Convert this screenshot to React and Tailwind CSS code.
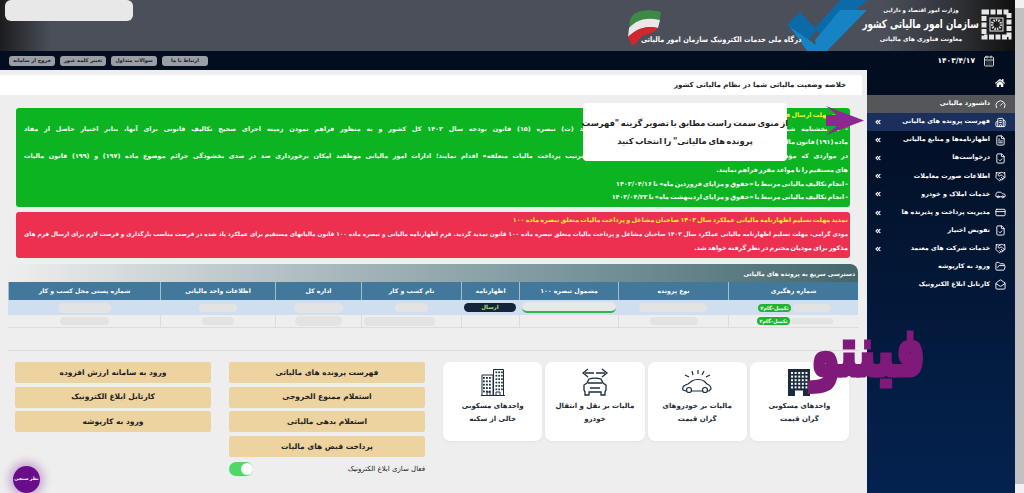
import { Gauge, Building2, FileText, FileCheck, Handshake, Car, CreditCard, FolderOpen, MailOpen, ChevronsLeft, CalendarDays } from 'lucide-react'
import { FaHome } from 'react-icons/fa'

const menu = [
  { label: 'فهرست پرونده های مالیاتی', icon: Building2, arrow: true, active: true },
  { label: 'اظهارنامه‌ها و منابع مالیاتی', icon: FileText, arrow: true },
  { label: 'درخواست‌ها', icon: FileCheck, arrow: true },
  { label: 'اطلاعات صورت معاملات', icon: Handshake, arrow: true },
  { label: 'خدمات املاک و خودرو', icon: Car, arrow: true },
  { label: 'مدیریت پرداخت و پذیرنده ها', icon: CreditCard, arrow: true },
  { label: 'تفویض اختیار', icon: FileCheck, arrow: true },
  { label: 'خدمات شرکت های معتمد', icon: Handshake, arrow: true },
  { label: 'ورود به کارپوشه', icon: FolderOpen },
  { label: 'کارتابل ابلاغ الکترونیک', icon: MailOpen },
]

const columns = ['شماره رهگیری', 'نوع پرونده', 'مشمول تبصره ۱۰۰', 'اظهارنامه', 'نام کسب و کار', 'اداره کل', 'اطلاعات واحد مالیاتی', 'شماره پستی محل کسب و کار']

function Blur({ className }) {
  return <span className={`block rounded-full bg-[#e3e3e3] ${className}`} />
}

function Badge() {
  return <span className="rounded-full bg-[#1fb52f] px-[2px] text-[5px] font-bold leading-[8px] text-white whitespace-nowrap">تکمیل-گام۴</span>
}

function TopBar() {
  return (
    <header className="relative h-[51px] shrink-0 overflow-hidden bg-[linear-gradient(to_left,#0f0f10_0%,#2c2e33_5%,#4a4f59_13%,#4a4f59_95%,#1c1c1e_100%)]">
      {/* blue check mark */}
      <svg className="absolute left-[787px] top-0" width="80" height="51" viewBox="0 0 80 51">
        <polygon points="53,0 80,0 38,40 28,28" fill="#0c6aa8" />
        <polygon points="0,25 13,12 30,30 20,42" fill="#0c6aa8" />
        <polygon points="53,10 80,10 40,51 30,51 28,40" fill="#1583c4" />
        <polygon points="3,27 22,40 38,51 20,51" fill="#1583c4" />
      </svg>
      {/* emblem */}
      <svg className="absolute left-[981px] top-[9px]" width="31" height="31" viewBox="0 0 31 31">
        <rect x="3" y="3" width="25" height="25" fill="none" stroke="#e6e6e6" strokeWidth="5" strokeDasharray="5 1.5" />
        <rect x="9" y="9" width="13" height="13" fill="#1d1d1d" stroke="#e6e6e6" />
        <circle cx="15.5" cy="15.5" r="4.5" fill="none" stroke="#d8d8d8" strokeWidth="2.5" strokeDasharray="1.5 1" />
      </svg>
      {/* flag */}
      <svg className="absolute left-[625px] top-[8px]" width="38" height="38" viewBox="0 0 38 38">
        <path d="M5 12 C8 3 20 0 36 4 L35 12 C22 9 12 11 4 20 Z" fill="#3c8a44" />
        <path d="M4 20 C12 11 22 9 35 12 L33 20 C22 17 12 20 3 29 Z" fill="#e8e8e8" />
        <path d="M3 29 C12 20 22 17 33 20 C30 24 24 26 17 28 C14 31 12 36 8 37 C6 37 5 32 3 29 Z" fill="#d0262e" />
      </svg>
      <div className="absolute right-[34px] top-[4px] flex w-[120px] flex-col items-center text-white">
        <span className="text-[5.5px] font-bold leading-[12px] whitespace-nowrap">وزارت امور اقتصاد و دارایی</span>
        <span className="scale-x-[0.76] text-[11.5px] font-bold leading-[17px] whitespace-nowrap">سازمان امور مالیاتی کشور</span>
        <span className="text-[6px] font-bold leading-[11px] whitespace-nowrap">معاونت فناوری های مالیاتی</span>
      </div>
      <span className="absolute right-[214px] top-[34px] origin-right scale-x-[0.88] text-[7.5px] font-semibold leading-[12px] text-white whitespace-nowrap">درگاه ملی خدمات الکترونیک سازمان امور مالیاتی</span>
      <div className="absolute left-[5px] top-0 h-[21px] w-[128px] rounded-[6px] bg-[#e8e8e8]" />
    </header>
  )
}

function NavStrip() {
  return (
    <div className="flex h-[19px] shrink-0 items-center justify-between bg-[#020d1f] pl-[9px] pr-[20px]">
      <div className="flex items-center gap-[8px] text-white">
        <CalendarDays size={12} className="text-[#d8d8d8]" />
        <span className="font-bold text-[7.5px]">۱۴۰۳/۴/۱۷</span>
      </div>
      <div className="flex flex-row-reverse gap-[5px]">
        {['خروج از سامانه', 'تغییر کلمه عبور', 'سوالات متداول', 'ارتباط با ما'].map(t => (
          <span key={t} className="flex h-[10px] w-[46px] items-center justify-center rounded-[3px] bg-[#9a9ea6] text-[5px] font-bold text-[#1b1b1b] whitespace-nowrap">{t}</span>
        ))}
      </div>
    </div>
  )
}

function Sidebar() {
  return (
    <aside className="flex w-[148px] shrink-0 flex-col bg-[linear-gradient(to_bottom,#020d1f,#04224f)] text-white">
      <div className="flex h-[25px] items-center pr-[10px]">
        <FaHome size={10} />
      </div>
      <div className="flex h-[18px] items-center gap-[5px] bg-[#55565a] pr-[9px]">
        <Gauge size={11} />
        <span className="text-[6.4px] font-bold whitespace-nowrap">داشبورد مالیاتی</span>
      </div>
      {menu.map(m => {
        const Icon = m.icon
        return (
          <div key={m.label} className={`flex h-[18.1px] items-center gap-[5px] pr-[9px] pl-[7px] ${m.active ? 'bg-[#1b2f5c]' : ''}`}>
            <Icon size={11} className="shrink-0" />
            <span className="flex-1 text-[6.4px] font-bold whitespace-nowrap">{m.label}</span>
            {m.arrow && <ChevronsLeft size={8} strokeWidth={3.5} className="shrink-0" />}
          </div>
        )
      })}
    </aside>
  )
}

function Line({ children, fill, className = '' }) {
  return <p className={`overflow-hidden whitespace-nowrap ${fill ? '[text-align-last:justify]' : ''} ${className}`}>{children}</p>
}

function Notices() {
  return (
    <>
      <div className="ml-[16px] mr-[17px] mt-[13px] h-[99px] rounded-[3px] bg-[#0bb420] pl-[8px] pr-[2px] py-[1px] text-[6.4px] font-bold leading-[13.7px] text-white [word-spacing:-1px]">
        <Line className="text-[#f3f12a]">تمدید مهلت ارسال فهرست حقوق و دستمزد فروردین و اردیبهشت سال ۱۴۰۳</Line>
        <Line fill>- به بخشنامه شماره ۲۰۰ فهرست حقوق و دستمزد در اجرای مقررات بند (ت) تبصره (۱۵) قانون بودجه سال ۱۴۰۳ کل کشور و به منظور فراهم نمودن زمینه اجرای صحیح تکالیف قانونی برای آنها، بنابر اختیار حاصل از مفاد</Line>
        <Line>ماده (۱۹۱) قانون مالیات های مستقیم</Line>
        <Line fill>در مواردی که مؤدیان نسبت به ارسال فهرست حقوق‌بگیران» و «پرداخت یا ترتیب پرداخت مالیات متعلقه» اقدام نمایند؛ ادارات امور مالیاتی موظفند امکان برخورداری صد در صدی بخشودگی جرائم موضوع ماده (۱۹۷) و (۱۹۹) قانون مالیات</Line>
        <Line>های مستقیم را تا مواعد مقرر فراهم نمایند.</Line>
        <Line>- انجام تکالیف مالیاتی مرتبط با «حقوق و مزایای فروردین ماه» تا ۱۴۰۳/۰۴/۱۶</Line>
        <Line>- انجام تکالیف مالیاتی مرتبط با «حقوق و مزایای اردیبهشت ماه» تا ۱۴۰۳/۰۴/۲۳</Line>
      </div>
      <div className="ml-[16px] mr-[17px] mt-[5px] h-[46px] rounded-[3px] bg-[#ee3050] pl-[8px] pr-[2px] pt-[1px] text-[6.4px] font-bold leading-[14px] text-white [word-spacing:-1px]">
        <Line className="text-[#f3f12a]">تمدید مهلت تسلیم اظهارنامه مالیاتی عملکرد سال ۱۴۰۲ صاحبان مشاغل و پرداخت مالیات متعلق تبصره ماده ۱۰۰</Line>
        <Line fill className="text-[5.8px] [word-spacing:-1.2px]">مودی گرامی، مهلت تسلیم اظهارنامه مالیاتی عملکرد سال ۱۴۰۲ صاحبان مشاغل و پرداخت مالیات متعلق تبصره ماده ۱۰۰ قانون تمدید گردید. فرم اظهارنامه مالیاتی و تبصره ماده ۱۰۰ قانون مالیاتهای مستقیم برای عملکرد یاد شده در فرصت مناسب بارگذاری و فرصت لازم برای ارسال فرم های</Line>
        <Line>مذکور برای مودیان محترم در نظر گرفته خواهد شد.</Line>
      </div>
    </>
  )
}

const gridCols = 'grid grid-cols-[130px_110px_99px_58px_100px_86px_115px_1fr]'

function QuickTable() {
  return (
    <section className="ml-[8px] mr-[9px] mt-[6px]">
      <div className="flex h-[18px] items-center rounded-tr-[8px] bg-[linear-gradient(to_left,#46666e,#6b8a92_25%,#a5b6bb_60%,#eeeeee)] pr-[3px] text-[6px] font-bold text-white">
        دسترسی سریع به پرونده های مالیاتی
      </div>
      <div className={`${gridCols} h-[18px] bg-[#41789b] text-[6.2px] font-bold text-white`}>
        {columns.map(c => (
          <div key={c} className="flex items-center justify-center border-l border-[#a8bccb] whitespace-nowrap">{c}</div>
        ))}
      </div>
      <div className={`${gridCols} h-[15px] bg-[#cfdff0]`}>
        <div className="flex items-center justify-center gap-[2px] pl-[3px]"><Blur className="h-[8px] w-[38px]" /><Badge /></div>
        <div className="flex items-center justify-center"><Blur className="h-[9px] w-[68px]" /></div>
        <div className="flex items-center justify-center"><span className="h-[11px] w-[94px] rounded-[6px] border-b-2 border-[#2fb54a] bg-[#e8e8e8]" /></div>
        <div className="flex items-center justify-center"><span className="flex h-[9px] w-[52px] items-center justify-center rounded-full bg-[#14253a] text-[5.5px] font-bold text-[#b5e27a]">ارسال</span></div>
        <div className="flex items-center justify-center"><Blur className="h-[9px] w-[33px]" /></div>
        <div className="flex items-center justify-center"><Blur className="h-[10px] w-[49px]" /></div>
        <div className="flex items-center justify-center"><Blur className="h-[8px] w-[38px]" /></div>
        <div className="flex items-center justify-center"><Blur className="h-[10px] w-[53px]" /></div>
      </div>
      <div className={`${gridCols} h-[13px] border-b border-[#dcdcdc] bg-[#eeeeee]`}>
        <div className="flex items-center justify-center gap-[1px] border-l border-[#dcdcdc] pl-[3px]"><Blur className="h-[6px] w-[42px]" /><Badge /></div>
        <div className="flex items-center justify-center border-l border-[#dcdcdc]"><Blur className="h-[8px] w-[48px]" /></div>
        <div className="border-l border-[#dcdcdc]" />
        <div className="border-l border-[#dcdcdc]" />
        <div className="flex items-center justify-start border-l border-[#dcdcdc] pl-[2px]"><Blur className="mr-[26px] h-[9px] w-[72px]" /></div>
        <div className="flex items-center justify-center border-l border-[#dcdcdc]"><Blur className="h-[10px] w-[47px]" /></div>
        <div className="flex items-center justify-center border-l border-[#dcdcdc]"><Blur className="h-[8px] w-[32px]" /></div>
        <div className="flex items-center justify-center"><Blur className="h-[8px] w-[49px]" /></div>
      </div>
    </section>
  )
}

function BuildingSolid() {
  const dots = []
  for (let r = 0; r < 5; r++) for (let c = 0; c < 5; c++) dots.push(<rect key={`${r}-${c}`} x={3 + c * 3.6} y={3 + r * 3.6} width="2" height="2" fill="#fff" />)
  return (
    <svg width="22" height="27" viewBox="0 0 22 27">
      <rect width="22" height="27" fill="#1a2c40" />
      {dots}
      <rect x="7" y="21.5" width="8" height="5.5" fill="#fff" />
    </svg>
  )
}

function CarRays() {
  return (
    <svg width="30" height="24" viewBox="0 0 30 24" fill="none" stroke="#1a2c40" strokeWidth="1.2">
      <path d="M10 1l1 4M16 0v4M22 1l-2 4M3 5l4 2M28 5l-4 2" />
      <path d="M1 20c-1-3 1-5 5-6l4-3c3-2 9-2 12 0l3 3c3 1 4 2 4 5l-2 2H4z" />
      <circle cx="7" cy="20" r="2.5" fill="#fff" />
      <circle cx="23" cy="20" r="2.5" fill="#fff" />
    </svg>
  )
}

function CarArrows() {
  return (
    <svg width="26" height="28" viewBox="0 0 26 28" fill="none" stroke="#1a2c40" strokeWidth="1.3">
      <path d="M12 5H3m3-4L1 5l5 4M14 5h9m-3-4 5 4-5 4" />
      <path d="M3 27v-3l-1-2v-5l3-2 2-4c3-1 9-1 12 0l2 4 3 2v5l-1 2v3h-4v-3H7v3z" />
      <path d="M6 15h14M8 20h10" />
    </svg>
  )
}

function Buildings() {
  const left = [], right = []
  for (let r = 0; r < 5; r++) for (let c = 0; c < 3; c++) left.push(<rect key={`l${r}${c}`} x={2 + c * 3} y={8 + r * 3.4} width="1.8" height="1.8" fill="#1a2c40" stroke="none" />)
  for (let r = 0; r < 6; r++) for (let c = 0; c < 3; c++) right.push(<rect key={`r${r}${c}`} x={14.5 + c * 2.8} y={2.5 + r * 3.4} width="1.7" height="1.7" fill="#1a2c40" stroke="none" />)
  return (
    <svg width="24" height="27" viewBox="0 0 24 27" fill="none" stroke="#1a2c40" strokeWidth="1">
      <path d="M1 26V6h11v20M12.5 26V.5h10V26M0 26.5h24" />
      {left}
      {right}
      <path d="M6 26v-3h3v3M15 26v-3h4v3" />
    </svg>
  )
}

const cards = [
  { icon: <BuildingSolid />, text: 'واحدهای مسکونی گران قیمت' },
  { icon: <CarRays />, text: 'مالیات بر خودروهای گران قیمت' },
  { icon: <CarArrows />, text: 'مالیات بر نقل و انتقال خودرو' },
  { icon: <Buildings />, text: 'واحدهای مسکونی خالی از سکنه' },
]

function Bottom() {
  const col1 = ['فهرست پرونده های مالیاتی', 'استعلام ممنوع الخروجی', 'استعلام بدهی مالیاتی', 'پرداخت قبض های مالیات']
  const col2 = ['ورود به سامانه ارزش افزوده', 'کارتابل ابلاغ الکترونیک', 'ورود به کارپوشه']
  return (
    <div className="mx-[8px] mt-[22px] flex gap-[18px] border-t border-[#dcdcdc] pr-[10px] pt-[11px]">
      <div className="grid h-[79px] w-[406px] grid-cols-4 gap-[3px]">
        {cards.map(c => (
          <div key={c.text} className="flex flex-col items-center rounded-[7px] bg-white px-[10px] pt-[6px] shadow-[0_1px_3px_rgba(0,0,0,0.05)]">
            <div className="flex h-[28px] items-center">{c.icon}</div>
            <p className="mt-[4px] text-center text-[7px] leading-[12.5px] font-semibold text-[#222b36]">{c.text}</p>
          </div>
        ))}
      </div>
      <div className="w-[196px]">
        <div className="flex flex-col gap-[3.6px]">
          {col1.map(t => <Tile key={t} text={t} />)}
        </div>
        <div className="mt-[5px] flex items-center justify-between">
          <span className="text-[7px] text-[#222]">فعال سازی ابلاغ الکترونیک</span>
          <span className="flex h-[14px] w-[24px] items-center rounded-full bg-[#4cd964] pl-[1px]">
            <span className="ml-auto h-[12px] w-[12px] rounded-full bg-white" />
          </span>
        </div>
      </div>
      <div className="flex w-[196px] flex-col gap-[3.6px]">
        {col2.map(t => <Tile key={t} text={t} />)}
      </div>
    </div>
  )
}

function Tile({ text }) {
  return <div className="flex h-[21px] items-center justify-center rounded-[2px] bg-[#ecd3a0] text-[7.5px] font-semibold text-[#222]">{text}</div>
}

export default function App() {
  return (
    <div dir="rtl" className="flex h-[493px] w-[1024px] overflow-hidden bg-[#eeeeee] font-['DejaVu_Sans',sans-serif]">
      {/* scrollbar */}
      <div className="flex w-[9px] shrink-0 flex-col bg-[#f1f1f1] pt-[8px] pb-[9px]">
        <div className="flex-1 bg-[#c1c1c1]" />
      </div>
      <div className="relative flex min-w-0 flex-1 flex-col">
        <TopBar />
        <NavStrip />
        <div className="flex min-h-0 flex-1">
          <Sidebar />
          <main className="min-w-0 flex-1 bg-[#eeeeee]">
            <div className="mr-[5px] mt-[5px] flex h-[20px] items-center bg-white pr-[16px] text-[7px] font-semibold text-[#222]">
              خلاصه وضعیت مالیاتی شما در نظام مالیاتی کشور
            </div>
            <Notices />
            <QuickTable />
            <Bottom />
          </main>
        </div>

        {/* overlays: guide callout, arrow, watermark, survey */}
        <div className="absolute left-[583px] top-[103px] flex h-[58px] w-[204px] items-center justify-center rounded-[4px] bg-white text-center text-[8.3px] font-semibold leading-[18px] text-[#222] [word-spacing:-1.2px]">
          <p className="whitespace-nowrap">از منوی سمت راست مطابق با تصویر گزینه "فهرست<br />پرونده های مالیاتی" را انتخاب کنید</p>
        </div>
        <svg className="absolute left-[826px] top-[105px]" width="39" height="31" viewBox="0 0 39 31">
          <polygon points="0,1 38,15.5 0,30 11,21 0,21 0,10 11,10" fill="#8a2a8e" />
        </svg>
        <span dir="rtl" className="absolute left-[803px] top-[317px] scale-x-[0.87] scale-y-[1.3] text-[52px] font-bold leading-[70px] text-[#7f1a7a] whitespace-nowrap [-webkit-text-stroke:4px_#7f1a7a]">فینتو</span>
        <div className="absolute left-[13px] top-[466px] flex h-[27px] w-[27px] items-center justify-center rounded-full bg-[#6a0d8a] text-[4.5px] font-bold text-white shadow-[0_0_8px_4px_rgba(106,13,138,0.3)] whitespace-nowrap">
          نظر سنجی
        </div>
      </div>
    </div>
  )
}
